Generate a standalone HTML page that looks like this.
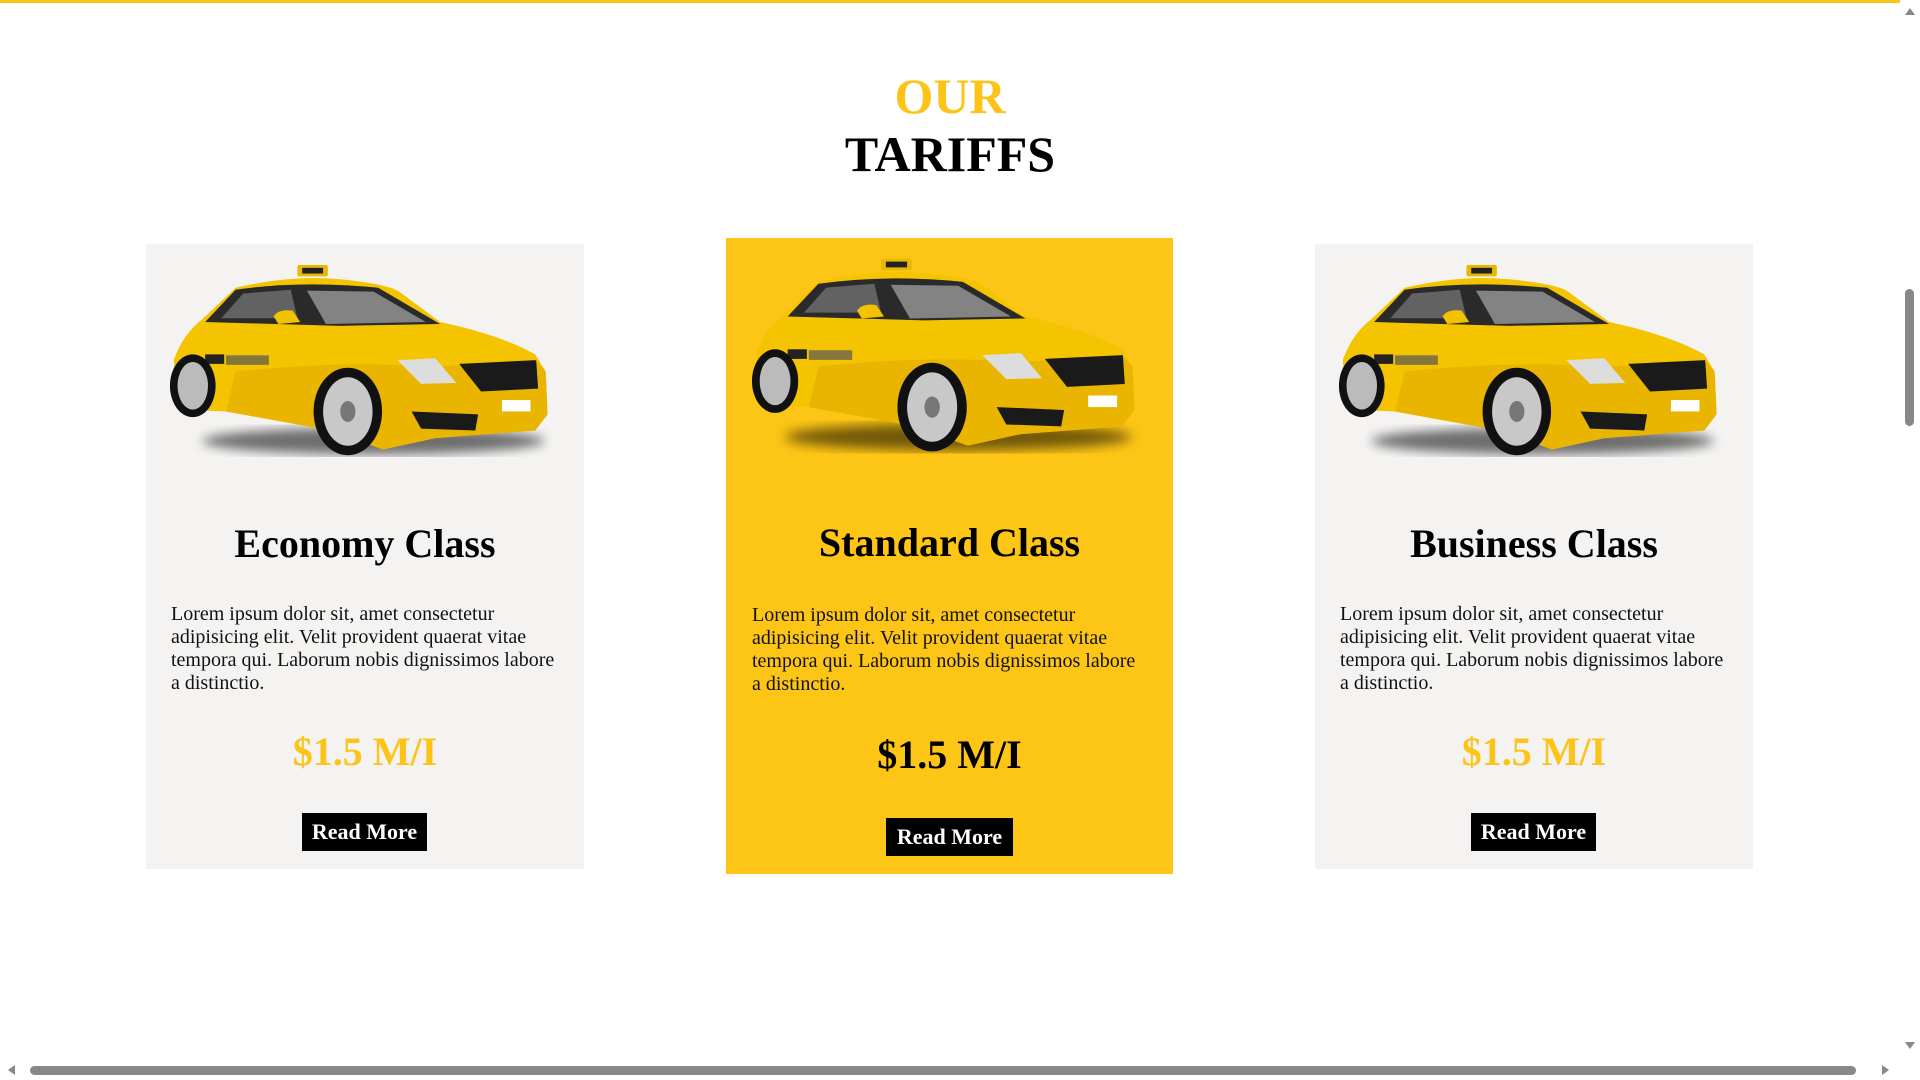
<!DOCTYPE html>
<html><head><meta charset="utf-8">
<style>
html,body{margin:0;padding:0;width:1920px;height:1080px;overflow:hidden;background:#fff;font-family:"Liberation Serif",serif;}
.topline{position:absolute;left:0;top:0;width:1900px;height:3px;background:#fcc419;}
.h{position:absolute;left:0;width:1900px;text-align:center;font-weight:bold;font-size:50px;line-height:58px;}
.card{position:absolute;background:#f4f3f2;}
.car{position:absolute;}
.title{position:absolute;left:0;right:0;text-align:center;font-weight:bold;font-size:40px;line-height:46px;color:#000;}
.p{position:absolute;font-size:20px;line-height:23px;color:#111;}
.price{position:absolute;left:0;right:0;text-align:center;font-weight:bold;font-size:40px;line-height:46px;color:#fcc419;}
.btn{position:absolute;background:#000;color:#fff;font-weight:bold;font-size:22px;text-align:center;}
.vs{position:absolute;left:1900px;top:0;width:20px;height:1060px;background:#fff;}
.hs{position:absolute;left:0;top:1060px;width:1920px;height:20px;background:#fff;}
</style></head><body>
<svg width="0" height="0" style="position:absolute">
<defs>
<filter id="bl"><feGaussianBlur stdDeviation="6"/></filter>
<symbol id="car" viewBox="20 10 410 220">
<ellipse cx="235" cy="203" rx="180" ry="14" fill="#000" opacity=".55" filter="url(#bl)"/>
<rect x="155" y="18" width="32" height="12" rx="2" fill="#e8b900"/>
<rect x="160" y="21" width="22" height="6" fill="#222"/>
<path d="M30 170 L25 118 Q35 90 55 75 L90 42 Q150 28 200 33 Q250 38 262 46 L305 78 Q370 92 405 112 L416 130 L418 175 L405 192 L300 200 L245 212 L190 192 L80 172 Z" fill="#f5c400"/>
<path d="M90 130 Q200 118 300 125 L405 118 L416 130 L418 175 L405 192 L300 200 L245 212 L190 192 L80 172 Z" fill="#e9b500"/>
<path d="M58 78 L90 44 Q160 34 240 42 L305 80 L200 82 Z" fill="#2a2a2a"/>
<path d="M165 45 L235 46 L290 78 L185 80 Z" fill="#9a9a9a" opacity=".8"/>
<path d="M75 74 L98 48 L148 44 L155 74 Z" fill="#888" opacity=".6"/>
<path d="M130 72 Q135 64 150 66 L158 78 L135 80 Z" fill="#f2c200"/>
<rect x="58" y="112" width="20" height="10" fill="#222"/>
<rect x="80" y="113" width="45" height="10" fill="#555" opacity=".7"/>
<ellipse cx="45" cy="145" rx="24" ry="33" fill="#111"/>
<ellipse cx="45" cy="145" rx="16" ry="25" fill="#bbb"/>
<ellipse cx="208" cy="172" rx="36" ry="46" fill="#111"/>
<ellipse cx="208" cy="172" rx="26" ry="36" fill="#c8c8c8"/>
<ellipse cx="208" cy="172" rx="8" ry="11" fill="#777"/>
<path d="M260 118 L300 116 L322 142 L285 143 Z" fill="#ddd"/>
<path d="M325 122 L406 118 L408 148 L348 151 Z" fill="#1a1a1a"/>
<rect x="370" y="160" width="30" height="12" fill="#fff"/>
<path d="M275 172 L345 175 L342 192 L285 190 Z" fill="#1a1a1a"/>
</symbol>
</defs></svg>

<div class="topline"></div>
<div class="h" style="top:67px;color:#fcc419">OUR</div>
<div class="h" style="top:125px;color:#000">TARIFFS</div>

<div class="card" style="left:146px;top:244px;width:438px;height:625px;">
  <svg class="car" style="left:23px;top:13px" width="390" height="210"><use href="#car"/></svg>
  <div class="title" style="top:277px">Economy Class</div>
  <div class="p" style="left:25px;top:359px;width:392px">Lorem ipsum dolor sit, amet consectetur adipisicing elit. Velit provident quaerat vitae tempora qui. Laborum nobis dignissimos labore a distinctio.</div>
  <div class="price" style="top:485px">$1.5 M/I</div>
  <div class="btn" style="left:156px;top:569px;width:125px;height:38px;line-height:37px">Read More</div>
</div>

<div class="card" style="left:726px;top:238px;width:447px;height:636px;background:#fdc516">
  <svg class="car" style="left:25px;top:13px" width="395" height="212"><use href="#car"/></svg>
  <div class="title" style="top:282px">Standard Class</div>
  <div class="p" style="left:26px;top:366px;width:395px">Lorem ipsum dolor sit, amet consectetur adipisicing elit. Velit provident quaerat vitae tempora qui. Laborum nobis dignissimos labore a distinctio.</div>
  <div class="price" style="top:494px;color:#000">$1.5 M/I</div>
  <div class="btn" style="left:160px;top:580px;width:127px;height:38px;line-height:37px">Read More</div>
</div>

<div class="card" style="left:1315px;top:244px;width:438px;height:625px;">
  <svg class="car" style="left:23px;top:13px" width="390" height="210"><use href="#car"/></svg>
  <div class="title" style="top:277px">Business Class</div>
  <div class="p" style="left:25px;top:359px;width:392px">Lorem ipsum dolor sit, amet consectetur adipisicing elit. Velit provident quaerat vitae tempora qui. Laborum nobis dignissimos labore a distinctio.</div>
  <div class="price" style="top:485px">$1.5 M/I</div>
  <div class="btn" style="left:156px;top:569px;width:125px;height:38px;line-height:37px">Read More</div>
</div>

<div class="vs">
  <div style="position:absolute;left:5px;top:8px;width:0;height:0;border-left:5px solid transparent;border-right:5px solid transparent;border-bottom:7px solid #888"></div>
  <div style="position:absolute;left:5px;top:289px;width:9px;height:137px;border-radius:5px;background:#888"></div>
  <div style="position:absolute;left:5px;top:1042px;width:0;height:0;border-left:5px solid transparent;border-right:5px solid transparent;border-top:7px solid #888"></div>
</div>
<div class="hs">
  <div style="position:absolute;left:8px;top:5px;width:0;height:0;border-top:5px solid transparent;border-bottom:5px solid transparent;border-right:7px solid #888"></div>
  <div style="position:absolute;left:30px;top:6px;width:1826px;height:9px;border-radius:5px;background:#888"></div>
  <div style="position:absolute;left:1882px;top:5px;width:0;height:0;border-top:5px solid transparent;border-bottom:5px solid transparent;border-left:7px solid #888"></div>
</div>
</body></html>
